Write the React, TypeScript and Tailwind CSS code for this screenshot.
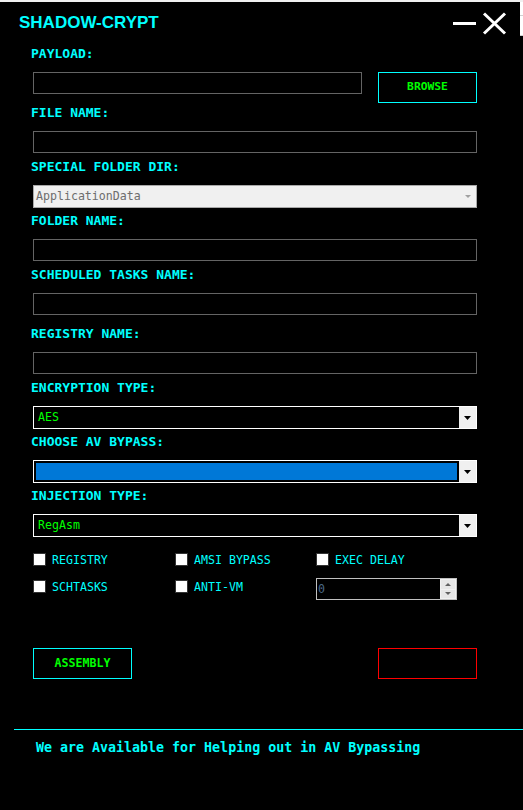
import React from "react";

const Label = ({ text, mt }: { text: string; mt: string }) => (
  <div className={`${mt} h-4 pl-[31px] text-[13px] leading-4 font-bold text-[#00ffff]`}>{text}</div>
);

const TextBox = ({ mt, w = "w-[444px]" }: { mt?: string; w?: string }) => (
  <div className={`${mt ?? ""} ml-[33px] ${w} h-[22px] border border-[#646464] bg-black`} />
);

const Arrow = ({ color = "#000000" }: { color?: string }) => (
  <svg width="7" height="4" viewBox="0 0 7 4">
    <path d="M0 0 H7 L3.5 4 Z" fill={color} />
  </svg>
);

const Combo = ({ mt, text, selected }: { mt: string; text?: string; selected?: boolean }) => (
  <div className={`${mt} ml-[33px] w-[444px] h-[23px] border border-white bg-black flex`}>
    <div className="flex-1 flex items-stretch p-[2px]">
      {selected ? (
        <div className="flex-1 bg-[#0078d7]" />
      ) : (
        <div className="flex-1 flex items-center pl-[2px] text-[11.6px] text-[#00ff00]">{text}</div>
      )}
    </div>
    <div className="w-[17px] bg-[#f0f0f0] flex items-center justify-center">
      <Arrow />
    </div>
  </div>
);

const Check = ({ text }: { text: string }) => (
  <div className="flex items-center h-[13px]">
    <div className="w-[13px] h-[13px] border border-[#333333] bg-white" />
    <span className="ml-[6px] mt-[1px] text-[11.6px] leading-[13px] text-[#00ffff]">{text}</span>
  </div>
);

export default function App() {
  return (
    <div className="w-[523px] h-[810px] bg-black overflow-hidden font-['DejaVu_Sans_Mono',monospace]">
      <div className="h-[2px] bg-[#f0f0f0]" />
      <div className="h-[44px] flex items-start">
        <div className="flex-1 pl-[19px] pt-[11px] font-['Liberation_Sans',Arial,sans-serif] text-[17px] leading-5 font-bold text-[#00ffff]">
          SHADOW-CRYPT
        </div>
        <div className="flex items-start pt-[10px] pr-[13px]">
          <div className="mt-[10px] w-[23px] h-[3px] bg-white" />
          <svg className="ml-[6px]" width="25" height="23" viewBox="0 0 25 23">
            <path d="M2 1.5 L23 21.5 M23 1.5 L2 21.5" stroke="white" strokeWidth="3" strokeLinecap="butt" />
          </svg>
        </div>
        <div className="w-[3px] h-[33px] bg-white flex flex-col">
          <div className="mt-[13px] h-px bg-[#d0d0d0]" />
          <div className="mt-[19px] h-px bg-[#d0d0d0]" />
        </div>
      </div>

      <Label text="PAYLOAD:" mt="mt-0" />
      <div className="mt-[10px] flex items-start h-[31px]">
        <TextBox w="w-[329px]" />
        <div className="ml-[16px] w-[99px] h-[31px] border border-[#00ffff] flex items-center justify-center text-[11.3px] font-bold text-[#00ff00]">
          BROWSE
        </div>
      </div>

      <Label text="FILE NAME:" mt="mt-[2px]" />
      <TextBox mt="mt-[10px]" />

      <Label text="SPECIAL FOLDER DIR:" mt="mt-[6px]" />
      <div className="mt-[10px] ml-[33px] w-[444px] h-[23px] border border-[#a8a8a8] bg-[#f0f0f0] flex items-center">
        <span className="flex-1 pl-[2px] text-[11.6px] text-[#6d6d6d]">ApplicationData</span>
        <div className="w-[17px] flex items-center justify-center">
          <svg width="6" height="3" viewBox="0 0 6 3">
            <path d="M0 0 H6 L3 3 Z" fill="#a0a0a0" />
          </svg>
        </div>
      </div>

      <Label text="FOLDER NAME:" mt="mt-[5px]" />
      <TextBox mt="mt-[10px]" />

      <Label text="SCHEDULED TASKS NAME:" mt="mt-[6px]" />
      <TextBox mt="mt-[10px]" />

      <Label text="REGISTRY NAME:" mt="mt-[11px]" />
      <TextBox mt="mt-[10px]" />

      <Label text="ENCRYPTION TYPE:" mt="mt-[6px]" />
      <Combo mt="mt-[10px]" text="AES" />

      <Label text="CHOOSE AV BYPASS:" mt="mt-[5px]" />
      <Combo mt="mt-[10px]" selected />

      <Label text="INJECTION TYPE:" mt="mt-[5px]" />
      <Combo mt="mt-[10px]" text="RegAsm" />

      <div className="mt-[16px] ml-[33px] grid grid-cols-[142px_141px_142px] h-[13px]">
        <Check text="REGISTRY" />
        <Check text="AMSI BYPASS" />
        <Check text="EXEC DELAY" />
      </div>
      <div className="mt-[12px] ml-[33px] grid grid-cols-[142px_141px_142px] h-[22px] items-start">
        <div className="mt-[2px]">
          <Check text="SCHTASKS" />
        </div>
        <div className="mt-[2px]">
          <Check text="ANTI-VM" />
        </div>
        <div className="w-[141px] h-[22px] border border-[#c0c0c0] bg-black flex">
          <span className="flex-1 pl-[1px] text-[11.6px] leading-5 text-[#4a6888]">0</span>
          <div className="w-[16px] bg-[#f0f0f0] flex flex-col p-px gap-px">
            <div className="flex-1 bg-[#e6e6e6] flex items-center justify-center">
              <svg width="6" height="3" viewBox="0 0 6 3">
                <path d="M0 3 H6 L3 0 Z" fill="#606060" />
              </svg>
            </div>
            <div className="flex-1 bg-[#e6e6e6] flex items-center justify-center">
              <svg width="6" height="3" viewBox="0 0 6 3">
                <path d="M0 0 H6 L3 3 Z" fill="#606060" />
              </svg>
            </div>
          </div>
        </div>
      </div>

      <div className="mt-[48px] ml-[33px] w-[444px] flex justify-between h-[31px]">
        <div className="w-[99px] h-[31px] border border-[#00ffff] flex items-center justify-center text-[11.6px] font-bold text-[#00ff00]">
          ASSEMBLY
        </div>
        <div className="w-[99px] h-[31px] border border-[#ff0000]" />
      </div>

      <div className="mt-[50px] ml-[14px] h-px bg-[#00ffff]" />
      <div className="mt-[10px] pl-[36px] text-[13.3px] leading-4 font-bold text-[#00ffff]">
        We are Available for Helping out in AV Bypassing
      </div>
    </div>
  );
}
